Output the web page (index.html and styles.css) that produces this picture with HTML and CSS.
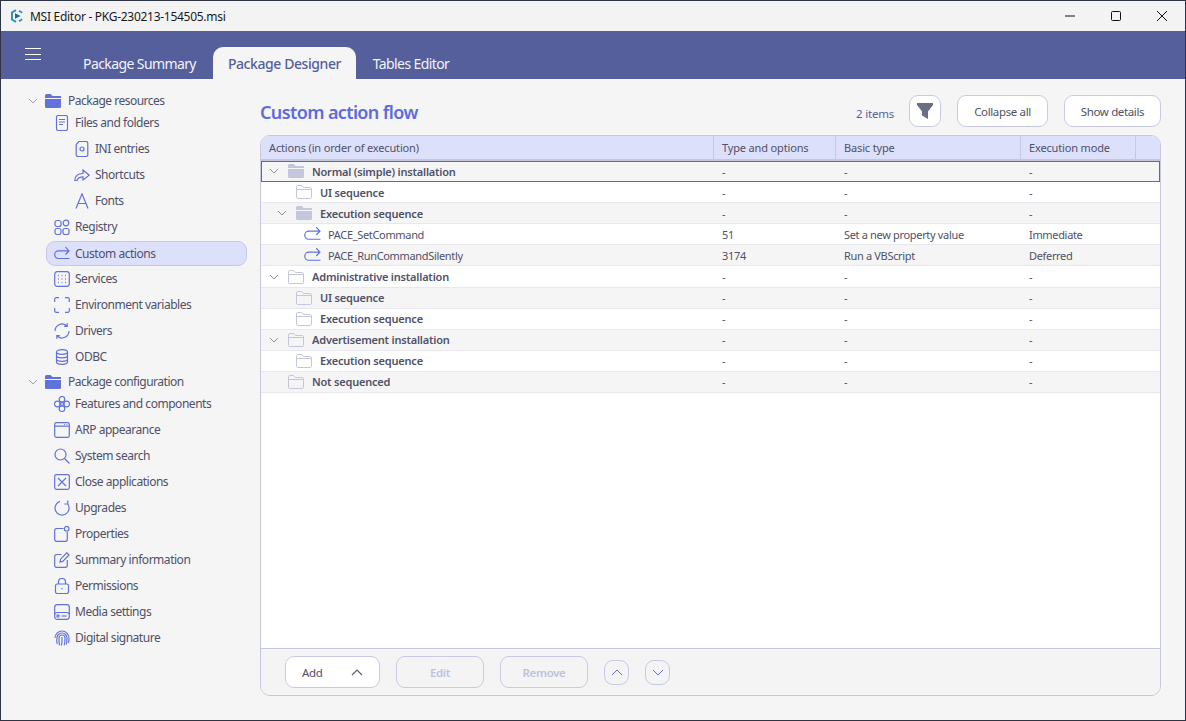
FILE: index.html
```html
<!DOCTYPE html>
<html lang="en">
<head>
<meta charset="utf-8">
<title>MSI Editor</title>
<link rel="stylesheet" href="styles.css">
</head>
<body>
<svg class="defs" width="0" height="0" aria-hidden="true">
  <defs>
    <symbol id="i-chev" viewBox="0 0 10 6"><path d="M1 1l4 4 4-4" fill="none" stroke="currentColor" stroke-width="1"/></symbol>
    <symbol id="i-folder" viewBox="0 0 16 14"><path d="M0 1.500A1.500 1.500 0 0 1 1.500 0h4l2 2H16v2H0zM0 5h16v7.500a1.500 1.500 0 0 1-1.500 1.500h-13A1.500 1.500 0 0 1 0 12.500z" fill="currentColor"/></symbol>
    <symbol id="i-folder-o" viewBox="0 0 16 14"><path d="M.5 1.800A1.300 1.300 0 0 1 1.800.5h3.700l2 2h7a1.300 1.300 0 0 1 1 1.300v8.400a1.300 1.300 0 0 1-1.300 1.300H1.800a1.300 1.300 0 0 1-1.300-1.300zM.5 4.500h15" fill="none" stroke="currentColor"/></symbol>
    <symbol id="i-file" viewBox="0 0 16 16"><rect x="2.500" y=".5" width="11" height="15" rx="1.800"/><path d="M5 4.500h6M5 7h6M5 9.500h4"/></symbol>
    <symbol id="i-ini" viewBox="0 0 16 16"><path d="M5 .5h7a1.800 1.800 0 0 1 1.800 1.800v11.400a1.800 1.800 0 0 1-1.800 1.800H4a1.800 1.800 0 0 1-1.800-1.800V3.500z"/><circle cx="8" cy="8" r="2"/></symbol>
    <symbol id="i-short" viewBox="0 0 16 16"><path d="M.8 13.500C.8 9 3.500 6.500 9 6.500V3l6.200 5.200L9 13v-3.200c-3.500 0-5 1-6 3.700z"/></symbol>
    <symbol id="i-font" viewBox="0 0 16 16"><path d="M2 15.500L8 .8l6 14.700M4.200 10.500h7.600"/></symbol>
    <symbol id="i-reg" viewBox="0 0 16 16"><rect x="1" y="1.500" width="6" height="6" rx="2"/><circle cx="12" cy="4" r="2.800"/><rect x="1" y="9.500" width="6" height="6" rx="2"/><rect x="9" y="9.500" width="6" height="6" rx="2"/></symbol>
    <symbol id="i-action" viewBox="0 0 16 16"><path d="M15.500 12.500H4.500a3.800 3.800 0 0 1 0-7.600h10.500M11.500 1.200L15 4.900l-3.500 3.600"/></symbol>
    <symbol id="i-svc" viewBox="0 0 16 16"><rect x=".7" y=".7" width="14.600" height="14.600" rx="2.500"/><path d="M4 4.500h.8M7.600 4.500h.8M11.200 4.500h.8M4 8h.8M7.600 8h.8M11.200 8h.8M4 11.500h.8M7.600 11.500h.8M11.200 11.500h.8" stroke-width="1.600"/></symbol>
    <symbol id="i-env" viewBox="0 0 16 16"><path d="M.7 5V2.200A1.500 1.500 0 0 1 2.200.7H5M11 .7h2.800a1.500 1.500 0 0 1 1.500 1.500V5M15.300 11v2.800a1.500 1.500 0 0 1-1.500 1.500H11M5 15.300H2.200a1.500 1.500 0 0 1-1.500-1.500V11"/></symbol>
    <symbol id="i-drv" viewBox="0 0 16 16"><path d="M1 8A7 7 0 0 1 12.500 2.700M15 8A7 7 0 0 1 3.500 13.300M13.200 .3v3h-3M2.800 15.700v-3h3"/></symbol>
    <symbol id="i-db" viewBox="0 0 16 16"><ellipse cx="8" cy="3" rx="5.500" ry="2.300"/><path d="M2.500 3v10c0 1.300 2.500 2.300 5.500 2.300s5.500-1 5.500-2.300V3M2.500 6.500c0 1.300 2.500 2.300 5.500 2.300s5.500-1 5.500-2.300M2.500 10c0 1.300 2.500 2.300 5.500 2.300s5.500-1 5.500-2.300"/></symbol>
    <symbol id="i-feat" viewBox="0 0 16 16"><circle cx="8" cy="3.300" r="2.800"/><circle cx="8" cy="12.700" r="2.800"/><circle cx="3.300" cy="8" r="2.800"/><circle cx="12.700" cy="8" r="2.800"/><path d="M8 6l2 2-2 2-2-2z"/></symbol>
    <symbol id="i-arp" viewBox="0 0 16 16"><rect x=".7" y=".7" width="14.600" height="14.600" rx="1.500"/><path d="M.7 4.200h14.600M10 2.500h.8M12.500 2.500h.8"/></symbol>
    <symbol id="i-search" viewBox="0 0 16 16"><circle cx="6.500" cy="6.500" r="5.500"/><path d="M10.500 10.500l5 5"/></symbol>
    <symbol id="i-close" viewBox="0 0 16 16"><rect x=".7" y=".7" width="14.600" height="14.600" rx="1.500"/><path d="M4 4l8 8M12 4l-8 8"/></symbol>
    <symbol id="i-upg" viewBox="0 0 16 16"><path d="M6 1.400A7 7 0 1 0 13.500 3.700M13.800 .5v3.500h-3.500"/></symbol>
    <symbol id="i-prop" viewBox="0 0 16 16"><path d="M9.500 2.500h-7a1.800 1.800 0 0 0-1.800 1.800v9.200a1.800 1.800 0 0 0 1.800 1.800h9a1.800 1.800 0 0 0 1.800-1.800V6"/><circle cx="12.700" cy="2.700" r="2.300"/></symbol>
    <symbol id="i-sum" viewBox="0 0 16 16"><path d="M7.500 2.500h-5a1.800 1.800 0 0 0-1.800 1.800v9.200a1.800 1.800 0 0 0 1.800 1.800h9a1.800 1.800 0 0 0 1.800-1.800V8M6 10l.6-2.800L12.800.8l2.200 2.200-6.200 6.400z"/></symbol>
    <symbol id="i-lock" viewBox="0 0 16 16"><rect x="1.500" y="6" width="13" height="9.500" rx="1.800"/><path d="M4.500 6V4a3.500 3.500 0 0 1 7 0v2M8 10v1.200"/></symbol>
    <symbol id="i-media" viewBox="0 0 16 16"><path d="M.7 10V3A2.500 2.500 0 0 1 3.200.7h9.600A2.500 2.500 0 0 1 15.300 3v7"/><rect x=".7" y="8.500" width="14.600" height="6.800" rx="2.500"/><circle cx="4" cy="12" r="1.200"/><path d="M7.500 12h5"/></symbol>
    <symbol id="i-sign" viewBox="0 0 16 16"><path d="M1 8a7 7 0 0 1 14 0c0 2 0 3.500-.5 5M3.300 14a11 11 0 0 1-.3-6 5 5 0 0 1 10 0c0 2.500 0 4-.7 6.500M5.500 15.300C5 13 5 10 5 8a3 3 0 0 1 6 0c0 3 0 5-.8 7.300M8 7v3.500c0 2-.3 3.500-.7 5"/></symbol>
  </defs>
</svg>
<div class="window">
  <div class="titlebar">
    <svg class="app-logo" viewBox="0 0 14 14" aria-hidden="true"><path d="M6 1.200L2 3.500v7l4 2.300" fill="none" stroke="#2b93c4" stroke-width="2"/><path d="M9 1.800l3.200 2M9 12.200l3.200-2" fill="none" stroke="#2b93c4" stroke-width="1.800"/><path d="M5 4.300L10.500 7 5 9.700z" fill="#1c6a94"/></svg>
    <span class="app-title">MSI Editor - PKG-230213-154505.msi</span>
    <div class="win-controls">
      <svg class="win-btn" viewBox="0 0 12 12" aria-hidden="true"><path d="M1 6h10" stroke="#111" fill="none"/></svg>
      <svg class="win-btn" viewBox="0 0 12 12" aria-hidden="true"><rect x="1.500" y="1.500" width="9" height="9" rx="1" stroke="#111" fill="none"/></svg>
      <svg class="win-btn" viewBox="0 0 12 12" aria-hidden="true"><path d="M1 1l10 10M11 1L1 11" stroke="#111" fill="none"/></svg>
    </div>
  </div>
  <header class="topbar">
    <div class="burger"><span></span><span></span><span></span></div>
    <nav class="tabs">
      <a class="tab">Package Summary</a>
      <a class="tab tab-active">Package Designer</a>
      <a class="tab">Tables Editor</a>
    </nav>
  </header>
  <div class="body">
    <aside class="sidebar">
      <div class="group"><svg class="chev"><use href="#i-chev"/></svg><svg class="group-folder"><use href="#i-folder"/></svg><span>Package resources</span></div>
      <div class="item"><svg class="ico"><use href="#i-file"/></svg><span>Files and folders</span></div>
      <div class="item sub"><svg class="ico"><use href="#i-ini"/></svg><span>INI entries</span></div>
      <div class="item sub"><svg class="ico"><use href="#i-short"/></svg><span>Shortcuts</span></div>
      <div class="item sub"><svg class="ico"><use href="#i-font"/></svg><span>Fonts</span></div>
      <div class="item"><svg class="ico"><use href="#i-reg"/></svg><span>Registry</span></div>
      <div class="item selected"><svg class="ico"><use href="#i-action"/></svg><span>Custom actions</span></div>
      <div class="item"><svg class="ico"><use href="#i-svc"/></svg><span>Services</span></div>
      <div class="item"><svg class="ico"><use href="#i-env"/></svg><span>Environment variables</span></div>
      <div class="item"><svg class="ico"><use href="#i-drv"/></svg><span>Drivers</span></div>
      <div class="item"><svg class="ico"><use href="#i-db"/></svg><span>ODBC</span></div>
      <div class="group group-next"><svg class="chev"><use href="#i-chev"/></svg><svg class="group-folder"><use href="#i-folder"/></svg><span>Package configuration</span></div>
      <div class="item"><svg class="ico"><use href="#i-feat"/></svg><span>Features and components</span></div>
      <div class="item"><svg class="ico"><use href="#i-arp"/></svg><span>ARP appearance</span></div>
      <div class="item"><svg class="ico"><use href="#i-search"/></svg><span>System search</span></div>
      <div class="item"><svg class="ico"><use href="#i-close"/></svg><span>Close applications</span></div>
      <div class="item"><svg class="ico"><use href="#i-upg"/></svg><span>Upgrades</span></div>
      <div class="item"><svg class="ico"><use href="#i-prop"/></svg><span>Properties</span></div>
      <div class="item"><svg class="ico"><use href="#i-sum"/></svg><span>Summary information</span></div>
      <div class="item"><svg class="ico"><use href="#i-lock"/></svg><span>Permissions</span></div>
      <div class="item"><svg class="ico"><use href="#i-media"/></svg><span>Media settings</span></div>
      <div class="item"><svg class="ico"><use href="#i-sign"/></svg><span>Digital signature</span></div>
    </aside>
    <main class="main">
      <div class="toolbar">
        <h1 class="heading">Custom action flow</h1>
        <span class="count">2 items</span>
        <button class="btn btn-filter" aria-label="Filter"><svg class="filter-ico" viewBox="0 0 16 16"><path d="M0 0h16v2l-5 6.500V16l-6-3.500V8.500L0 2z" fill="#6b6e85"/></svg></button>
        <button class="btn btn-collapse">Collapse all</button>
        <button class="btn btn-details">Show details</button>
      </div>
      <section class="panel">
        <div class="row head">
          <div class="cell">Actions (in order of execution)</div>
          <div class="cell">Type and options</div>
          <div class="cell">Basic type</div>
          <div class="cell">Execution mode</div>
          <div class="cell"></div>
        </div>
        <div class="rows">
          <div class="row alt focus bold">
            <div class="cell tree l0"><svg class="tchev"><use href="#i-chev"/></svg><svg class="tfolder"><use href="#i-folder"/></svg><span>Normal (simple) installation</span></div>
            <div class="cell">-</div><div class="cell">-</div><div class="cell">-</div><div class="cell"></div>
          </div>
          <div class="row bold">
            <div class="cell tree l1"><span class="tchev"></span><svg class="tfolder"><use href="#i-folder-o"/></svg><span>UI sequence</span></div>
            <div class="cell">-</div><div class="cell">-</div><div class="cell">-</div><div class="cell"></div>
          </div>
          <div class="row alt bold">
            <div class="cell tree l1"><svg class="tchev"><use href="#i-chev"/></svg><svg class="tfolder"><use href="#i-folder"/></svg><span>Execution sequence</span></div>
            <div class="cell">-</div><div class="cell">-</div><div class="cell">-</div><div class="cell"></div>
          </div>
          <div class="row">
            <div class="cell tree l2"><svg class="tact"><use href="#i-action"/></svg><span>PACE_SetCommand</span></div>
            <div class="cell">51</div><div class="cell">Set a new property value</div><div class="cell">Immediate</div><div class="cell"></div>
          </div>
          <div class="row alt">
            <div class="cell tree l2"><svg class="tact"><use href="#i-action"/></svg><span>PACE_RunCommandSilently</span></div>
            <div class="cell">3174</div><div class="cell">Run a VBScript</div><div class="cell">Deferred</div><div class="cell"></div>
          </div>
          <div class="row bold">
            <div class="cell tree l0"><svg class="tchev"><use href="#i-chev"/></svg><svg class="tfolder"><use href="#i-folder-o"/></svg><span>Administrative installation</span></div>
            <div class="cell">-</div><div class="cell">-</div><div class="cell">-</div><div class="cell"></div>
          </div>
          <div class="row alt bold">
            <div class="cell tree l1"><span class="tchev"></span><svg class="tfolder"><use href="#i-folder-o"/></svg><span>UI sequence</span></div>
            <div class="cell">-</div><div class="cell">-</div><div class="cell">-</div><div class="cell"></div>
          </div>
          <div class="row bold">
            <div class="cell tree l1"><span class="tchev"></span><svg class="tfolder"><use href="#i-folder-o"/></svg><span>Execution sequence</span></div>
            <div class="cell">-</div><div class="cell">-</div><div class="cell">-</div><div class="cell"></div>
          </div>
          <div class="row alt bold">
            <div class="cell tree l0"><svg class="tchev"><use href="#i-chev"/></svg><svg class="tfolder"><use href="#i-folder-o"/></svg><span>Advertisement installation</span></div>
            <div class="cell">-</div><div class="cell">-</div><div class="cell">-</div><div class="cell"></div>
          </div>
          <div class="row bold">
            <div class="cell tree l1"><span class="tchev"></span><svg class="tfolder"><use href="#i-folder-o"/></svg><span>Execution sequence</span></div>
            <div class="cell">-</div><div class="cell">-</div><div class="cell">-</div><div class="cell"></div>
          </div>
          <div class="row alt bold">
            <div class="cell tree l0"><span class="tchev"></span><svg class="tfolder"><use href="#i-folder-o"/></svg><span>Not sequenced</span></div>
            <div class="cell">-</div><div class="cell">-</div><div class="cell">-</div><div class="cell"></div>
          </div>
        </div>
        <div class="footer">
          <button class="btn btn-add"><span>Add</span><svg class="add-chev" viewBox="0 0 12 7"><path d="M1 6l5-5 5 5" fill="none" stroke="#5b5d72" stroke-width="1.200"/></svg></button>
          <button class="btn btn-off btn-edit">Edit</button>
          <button class="btn btn-off btn-remove">Remove</button>
          <button class="btn-round" aria-label="Up"><svg viewBox="0 0 12 7"><path d="M1 6l5-5 5 5" fill="none" stroke="#6272dc"/></svg></button>
          <button class="btn-round" aria-label="Down"><svg viewBox="0 0 12 7"><path d="M1 1l5 5 5-5" fill="none" stroke="#6272dc"/></svg></button>
        </div>
      </section>
    </main>
  </div>
</div>
</body>
</html>
```
FILE: styles.css
```css
* { box-sizing: border-box; }
html, body { margin: 0; padding: 0; height: 100%; }
body {
  font-family: "Noto Sans", "Open Sans", "Liberation Sans", sans-serif;
  font-size: 12px;
  color: #4f5168;
  background: #f5f5f5;
  overflow: hidden;
}
.defs { position: absolute; }
.window {
  width: 1186px;
  height: 721px;
  display: flex;
  flex-direction: column;
  border: 1px solid #2e3444;
  background: #f5f5f5;
}
.titlebar {
  height: 30px;
  flex: none;
  display: flex;
  align-items: center;
  background: #f3f3f3;
  padding-left: 9px;
}
.app-logo { width: 14px; height: 14px; margin-right: 6px; }
.app-title { font-size: 12px; color: #1a1a1a; letter-spacing: -.28px; }
.win-controls { margin-left: auto; display: flex; gap: 34px; padding-right: 17px; }
.win-btn { width: 12px; height: 12px; display: block; }

.topbar {
  height: 48px;
  flex: none;
  background: #555f9b;
  display: flex;
  align-items: flex-end;
}
.burger {
  width: 16px;
  margin: 0 27px 19px 24px;
  display: flex;
  flex-direction: column;
  gap: 4.500px;
}
.burger span { display: block; height: 1px; background: #fff; }
.tabs { display: flex; gap: 2px; }
.tab {
  width: 143px;
  height: 32px;
  display: flex;
  align-items: center;
  justify-content: center;
  font-size: 14px;
  letter-spacing: -.6px;
  color: #f2f3fa;
  border-radius: 10px 10px 0 0;
}
.tab-active { background: #f5f5f5; color: #555f9b; font-weight: 500; letter-spacing: -.42px; }
.tab:last-child { width: 106px; }

.body { flex: 1; display: flex; min-height: 0; }
.sidebar { width: 259px; flex: none; padding-top: 13px; }
.group {
  height: 18px;
  display: flex;
  align-items: center;
  padding-left: 27px;
  letter-spacing: -.5px;
}
.group-next { margin-top: 3px; }
.group span, .item span { padding-bottom: 1px; }
.chev { width: 10px; height: 6px; color: #a0a1ad; margin-right: 7px; flex: none; }
.group-folder { width: 16px; height: 14px; color: #6272dc; margin-right: 7px; flex: none; }
.item {
  height: 26px;
  margin: 0 13px 0 45px;
  padding-left: 8px;
  display: flex;
  align-items: center;
  gap: 5px;
  letter-spacing: -.47px;
  border: 1px solid transparent;
  border-radius: 9px;
}
.item.sub { padding-left: 28px; }
.item.selected {
  height: 25px;
  margin-top: 1px;
  background: #dde0fb;
  border-color: #c6c8e6;
}
.ico {
  width: 16px;
  height: 16px;
  flex: none;
  fill: none;
  stroke: #6272dc;
  stroke-width: 1.200;
  margin-left: -1px;
}

.main {
  flex: 1;
  min-width: 0;
  display: flex;
  flex-direction: column;
  padding: 16px 24px 24px 0;
}
.toolbar { height: 32px; flex: none; display: flex; align-items: center; margin-bottom: 8px; }
.heading {
  margin: 2px auto 0 0;
  font-size: 18px;
  font-weight: 600;
  letter-spacing: -.62px;
  color: #5d6bdb;
}
.count { font-size: 11.500px; color: #555f9b; margin: 5px 15px 0 0; letter-spacing: -.22px; }
.btn {
  font: inherit;
  font-size: 11.500px;
  letter-spacing: -.36px;
  color: #4f5168;
  background: #fff;
  border: 1px solid #c9c9e3;
  border-radius: 9px;
  height: 32px;
  padding: 0;
  display: flex;
  align-items: center;
  justify-content: center;
}
.btn-filter { width: 32px; margin-right: 16px; }
.filter-ico { width: 16px; height: 16px; }
.btn-collapse { width: 91px; margin-right: 16px; }
.btn-details { width: 97px; }

.panel {
  flex: 1;
  min-height: 0;
  display: flex;
  flex-direction: column;
  background: #fff;
  border: 1px solid #c6c7e0;
  border-radius: 10px;
  overflow: hidden;
}
.row {
  display: grid;
  grid-template-columns: 453px 122px 185px 115px 1fr;
  height: 21.100px;
  align-items: stretch;
  font-size: 11px;
  letter-spacing: -.33px;
  border-bottom: 1px solid #e8e8ee;
  background: #fff;
}
.row.alt { background: #f5f5f5; }
.cell { display: flex; align-items: center; padding-left: 8px; color: #4f5168; font-weight: 400; }
.row.bold .tree { font-weight: 600; letter-spacing: -.2px; }
.row.head {
  height: 25px;
  background: #dde0fb;
  border-bottom: 2px solid #c5c7dc;
  letter-spacing: -.15px;
}
.row.head .cell { border-right: 1px solid #c6c8e6; }
.row.head .cell:last-child { border-right: 0; }
.rows { flex: 1; min-height: 0; }
.row.focus { outline: 1px solid #5a68ad; outline-offset: -1px; }
.tree.l0 { padding-left: 8px; }
.tree.l1 { padding-left: 16px; }
.tree.l2 { padding-left: 43px; }
.tchev { width: 10px; height: 6px; color: #8f909d; margin-right: 9px; flex: none; display: block; }
.tfolder { width: 16px; height: 14px; color: #c4c6de; margin-right: 8px; flex: none; }
.tact {
  width: 17px; height: 17px; flex: none; margin-right: 7px;
  fill: none; stroke: #6272dc; stroke-width: 1.100;
}
.footer {
  height: 47px;
  flex: none;
  display: flex;
  align-items: center;
  padding-left: 24px;
  gap: 16px;
  background: #f4f4f4;
  border-top: 1px solid #c6c7e0;
}
.btn-add { width: 95px; justify-content: space-between; padding: 0 16px; }
.add-chev { width: 12px; height: 7px; }
.btn-off { background: transparent; color: #c0c1dc; font-weight: 600; }
.btn-edit, .btn-remove { width: 88px; }
.btn-round {
  width: 25px;
  height: 25px;
  padding: 0;
  background: transparent;
  border: 1px solid #c9c9e3;
  border-radius: 9px;
  display: flex;
  align-items: center;
  justify-content: center;
}
.btn-round svg { width: 12px; height: 7px; }
```
